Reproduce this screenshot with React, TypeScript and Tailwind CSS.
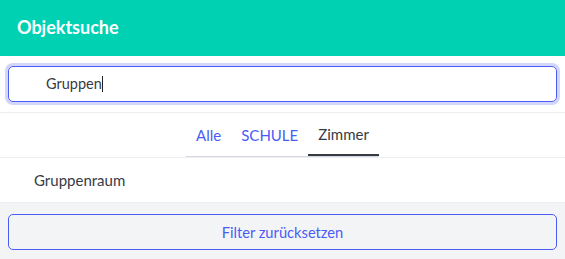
export default function App() {
  return (
    <div className="w-[565px] h-[259px] flex flex-col bg-white text-[#363a45]" style={{ fontFamily: 'Lato, "Noto Sans", sans-serif' }}>
      <div className="h-[56px] bg-[#00d1b2] flex items-center px-[17px] pb-[3px] shrink-0">
        <h1 className="text-[18px] font-bold text-white leading-none">Objektsuche</h1>
      </div>
      <div className="h-[57px] px-[8px] pt-[10px] border-b border-[#eceef1] shrink-0">
        <div className="h-[36px] rounded-[5px] border border-[#4a5cf5] ring-[3px] ring-[#4a5cf5]/25 flex items-center pl-[37px] text-[14.5px] text-[#363a45]">
          <span>Gruppen</span>
          <span className="inline-block w-[1px] h-[16px] bg-[#222]"></span>
        </div>
      </div>
      <div className="h-[45px] border-b border-[#eceef1] flex justify-center items-end shrink-0">
        <ul className="flex border-b border-[#d6d9e0] text-[15px]">
          <li className="px-[10px] pt-[3px] h-[44px] flex items-center text-[#4a5cf5]">Alle</li>
          <li className="px-[10px] pt-[3px] h-[44px] flex items-center text-[#4a5cf5]">SCHULE</li>
          <li className="px-[10px] pt-[3px] h-[44px] flex items-center text-[#363a45] border-b-2 border-[#363a45] -mb-[1px]">Zimmer</li>
        </ul>
      </div>
      <div className="h-[44px] flex items-center pl-[34px] text-[15px] text-[#363a45] shrink-0">Gruppenraum</div>
      <div className="flex-1 bg-[#f3f4f6] border-t border-[#eceef1] px-[8px] pt-[11px]">
        <button className="w-full h-[36px] rounded-[5px] border border-[#4a5cf5] text-[#4a5cf5] text-[14.7px] flex items-center justify-center bg-transparent">
          Filter zurücksetzen
        </button>
      </div>
    </div>
  );
}
